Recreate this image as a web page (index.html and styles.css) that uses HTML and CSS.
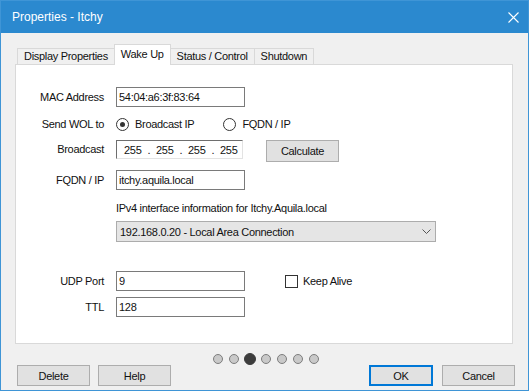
FILE: index.html
```html
<!DOCTYPE html>
<html lang="en">
<head>
<meta charset="UTF-8" />
<title>Properties - Itchy</title>
<link rel="stylesheet" href="styles.css">
</head>
<body>

<div class="window">
  <header class="titlebar">
    <span class="title">Properties - Itchy</span>
    <svg class="close" width="11" height="11" viewBox="0 0 11 11">
      <path d="M0.5 0.5L10.5 10.5M10.5 0.5L0.5 10.5" stroke="#fff" stroke-width="1.1" fill="none" />
    </svg>
  </header>

  <div class="content">
    <nav class="tabs">
      <div class="tab">Display Properties</div>
      <div class="tab active">Wake Up</div>
      <div class="tab">Status / Control</div>
      <div class="tab">Shutdown</div>
    </nav>

    <section class="panel">
      <div class="row r-mac">
        <span class="lbl">MAC Address</span>
        <div class="field">54:04:a6:3f:83:64</div>
      </div>

      <div class="row r-send">
        <span class="lbl">Send WOL to</span>
        <span class="radio on"></span><span class="opt first">Broadcast IP</span>
        <span class="radio"></span><span class="opt">FQDN / IP</span>
      </div>

      <div class="row r-bcast">
        <span class="lbl">Broadcast</span>
        <div class="ipbox">
          <span class="oct">255</span><span class="sep">.</span>
          <span class="oct">255</span><span class="sep">.</span>
          <span class="oct">255</span><span class="sep">.</span>
          <span class="oct">255</span>
        </div>
        <button class="btn calc">Calculate</button>
      </div>

      <div class="row r-fqdn">
        <span class="lbl">FQDN / IP</span>
        <div class="field">itchy.aquila.local</div>
      </div>

      <div class="iface">IPv4 interface information for Itchy.Aquila.local</div>
      <div class="select">
        <span>192.168.0.20 - Local Area Connection</span>
        <svg width="9" height="5" viewBox="0 0 9 5">
          <path d="M0.5 0.5L4.5 4.5L8.5 0.5" stroke="#555" fill="none" />
        </svg>
      </div>

      <div class="row r-udp">
        <span class="lbl">UDP Port</span>
        <div class="field">9</div>
        <span class="check"></span><span>Keep Alive</span>
      </div>

      <div class="row r-ttl">
        <span class="lbl">TTL</span>
        <div class="field">128</div>
      </div>
    </section>

    <div class="pager">
      <span class="cell"><span class="dot"></span></span>
      <span class="cell"><span class="dot"></span></span>
      <span class="cell"><span class="dot current"></span></span>
      <span class="cell"><span class="dot"></span></span>
      <span class="cell"><span class="dot"></span></span>
      <span class="cell"><span class="dot"></span></span>
      <span class="cell"><span class="dot"></span></span>
    </div>

    <div class="actions">
      <button class="btn">Delete</button>
      <button class="btn help">Help</button>
      <div class="spacer"></div>
      <button class="btn ok">OK</button>
      <button class="btn cancel">Cancel</button>
    </div>
  </div>
</div>

</body>
</html>
```

FILE: styles.css
```css
body {
  margin: 0;
  font-family: "Liberation Sans", Arial, sans-serif;
  font-size: 11px;
  letter-spacing: -0.3px;
  color: #111;
  background: #f0f0f0;
}

.window {
  width: 529px;
  height: 391px;
  box-sizing: border-box;
  border: 1px solid #3f95d6;
  background: #f0f0f0;
  display: flex;
  flex-direction: column;
}

/* title bar */
.titlebar {
  height: 32px;
  flex: none;
  background: #2b89cf;
  color: #fff;
  display: flex;
  align-items: center;
  justify-content: space-between;
  padding: 0 9px 0 11px;
}
.title {
  font-size: 12px;
  letter-spacing: 0;
}
.close {
  margin-top: 1px;
}

.content {
  flex: 1;
  display: flex;
  flex-direction: column;
  padding: 11px 15px 0 14px;
}

/* tabs */
.tabs {
  display: flex;
  align-items: flex-end;
  height: 20px;
  padding-left: 2px;
  position: relative;
  z-index: 1;
}
.tab {
  height: 16px;
  box-sizing: border-box;
  line-height: 14px;
  padding: 0 6px;
  border: 1px solid #d9d9d9;
  border-bottom: none;
  margin-right: -1px;
  background: #f0f0f0;
}
.tab.active {
  height: 21px;
  line-height: 18px;
  background: #fff;
  margin-bottom: -1px;
  position: relative;
  z-index: 2;
}

/* panel */
.panel {
  height: 280px;
  box-sizing: border-box;
  border: 1px solid #d9d9d9;
  background: #fff;
  padding-top: 22px;
}
.row {
  display: flex;
  align-items: center;
  height: 20px;
}
.lbl {
  width: 88px;
  flex: none;
  text-align: right;
  margin-right: 12px;
}
.field {
  width: 129px;
  height: 20px;
  box-sizing: border-box;
  border: 1px solid #7a7a7a;
  padding-left: 2px;
  line-height: 18px;
}

.r-send { margin-top: 7px; }
.radio {
  width: 13px;
  height: 13px;
  box-sizing: border-box;
  border: 1px solid #333;
  border-radius: 50%;
  margin-right: 6px;
  display: flex;
  align-items: center;
  justify-content: center;
}
.radio.on::after {
  content: "";
  width: 5px;
  height: 5px;
  border-radius: 50%;
  background: #333;
}
.opt.first { margin-right: 29px; }

.r-bcast {
  margin-top: 6px;
  height: 22px;
  align-items: flex-start;
}
.r-bcast .lbl { line-height: 19px; }
.ipbox {
  width: 127px;
  height: 19px;
  box-sizing: border-box;
  border-top: 1px solid #6e6e6e;
  border-left: 1px solid #6e6e6e;
  border-right: 1px solid #e3e3e3;
  border-bottom: 1px solid #e3e3e3;
  display: flex;
  align-items: center;
  padding-left: 7px;
}
.oct { width: 18px; }
.sep { width: 14px; text-align: center; }

.btn {
  font: inherit;
  letter-spacing: inherit;
  color: #111;
  width: 73px;
  height: 21px;
  padding: 0;
  background: #e1e1e1;
  border: 1px solid #adadad;
}
.calc {
  height: 22px;
  margin-left: 23px;
}

.r-fqdn { margin-top: 8px; }

.iface {
  margin: 12px 0 0 100px;
  line-height: 13px;
}
.select {
  margin: 6px 0 0 100px;
  width: 320px;
  height: 21px;
  box-sizing: border-box;
  background: #e5e5e5;
  border: 1px solid #acacac;
  display: flex;
  align-items: center;
  justify-content: space-between;
  padding: 0 4px 0 3px;
}

.r-udp { margin-top: 29px; }
.check {
  width: 13px;
  height: 13px;
  box-sizing: border-box;
  border: 1px solid #333;
  margin: 0 5px 0 40px;
}
.r-ttl { margin-top: 6px; }

/* pager dots */
.pager {
  display: flex;
  justify-content: center;
  align-items: center;
  height: 12px;
  margin-top: 9px;
  padding-left: 4px;
}
.cell {
  width: 16px;
  display: flex;
  justify-content: center;
}
.dot {
  width: 10px;
  height: 10px;
  box-sizing: border-box;
  border-radius: 50%;
  background: #c9c9c9;
  border: 1px solid #7d7d7d;
}
.dot.current {
  width: 12px;
  height: 12px;
  background: #3c3c3c;
  border-color: #3c3c3c;
}

/* bottom buttons */
.actions {
  display: flex;
  margin: 0 -2px 0 2px;
}
.help { margin-left: 8px; }
.spacer { flex: 1; }
.ok {
  width: 64px;
  border: 2px solid #0078d7;
}
.cancel { margin-left: 9px; }
```
